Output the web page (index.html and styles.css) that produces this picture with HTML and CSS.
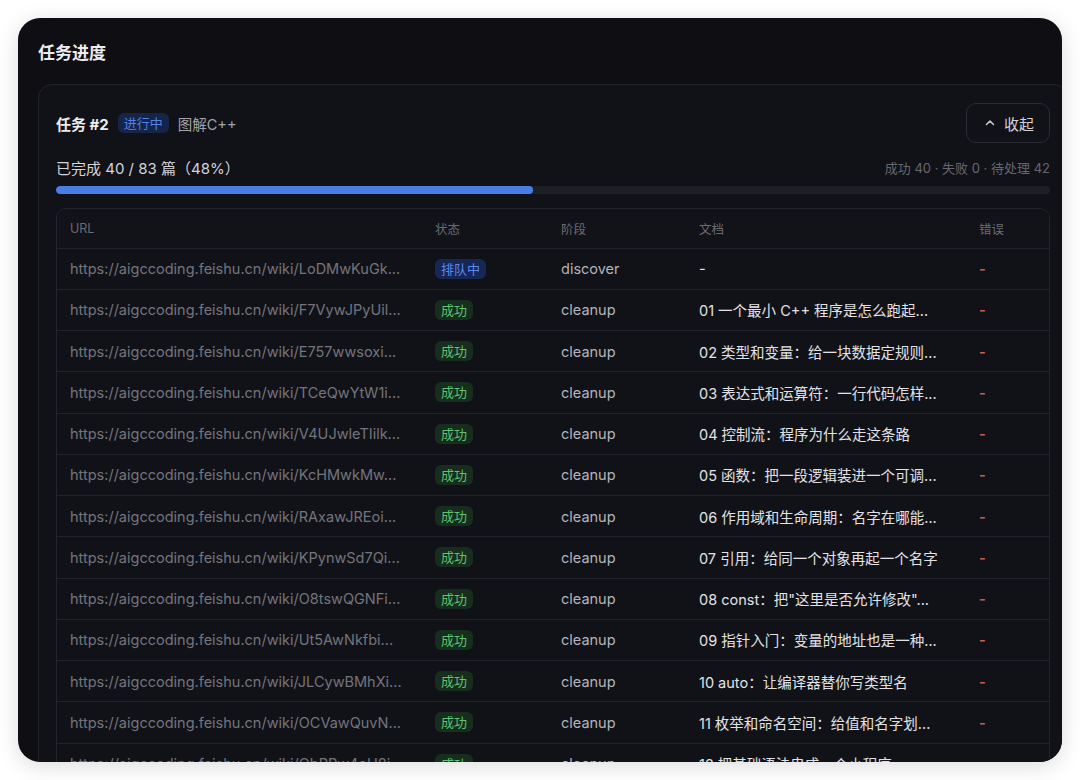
FILE: index.html
```html
<!DOCTYPE html>
<html lang="zh-CN">

<head>
    <meta charset="UTF-8">
    <meta name="viewport" content="width=device-width, initial-scale=1.0">
    <title>任务进度</title>
    <link rel="stylesheet" href="styles.css">
</head>

<body>
    <div class="panel">
        <h2 class="panel-title">任务进度</h2>

        <div class="task-card">
            <div class="task-head">
                <div class="task-info">
                    <span class="task-name">任务 #2</span>
                    <span class="badge badge-running">进行中</span>
                    <span class="task-book">图解C++</span>
                </div>
                <button class="collapse-btn">
                    <svg width="12" height="12" viewBox="0 0 12 12" fill="none">
                        <path d="M2.5 7.5 6 4l3.5 3.5" stroke="#c9c9cf" stroke-width="1.5" stroke-linecap="round" stroke-linejoin="round" />
                    </svg>
                    收起
                </button>
            </div>

            <div class="progress-line">
                <span class="progress-text">已完成 40 / 83 篇（48%）</span>
                <span class="progress-stats">成功 40 · 失败 0 · 待处理 42</span>
            </div>
            <div class="progress-bar">
                <div class="progress-fill" style="width: 48%"></div>
            </div>

            <div class="table-wrap">
                <table class="doc-table">
                    <colgroup>
                        <col style="width: 365px">
                        <col style="width: 126px">
                        <col style="width: 138px">
                        <col style="width: 280px">
                        <col>
                    </colgroup>
                    <thead>
                        <tr>
                            <th>URL</th>
                            <th>状态</th>
                            <th>阶段</th>
                            <th>文档</th>
                            <th>错误</th>
                        </tr>
                    </thead>
                    <tbody>
                        <tr>
                            <td class="url">https://aigccoding.feishu.cn/wiki/LoDMwKuGk...</td>
                            <td><span class="badge badge-queued">排队中</span></td>
                            <td class="stage">discover</td>
                            <td class="doc">-</td>
                            <td class="err">-</td>
                        </tr>
                        <tr>
                            <td class="url">https://aigccoding.feishu.cn/wiki/F7VywJPyUil...</td>
                            <td><span class="badge badge-ok">成功</span></td>
                            <td class="stage">cleanup</td>
                            <td class="doc">01 一个最小 C++ 程序是怎么跑起...</td>
                            <td class="err">-</td>
                        </tr>
                        <tr>
                            <td class="url">https://aigccoding.feishu.cn/wiki/E757wwsoxi...</td>
                            <td><span class="badge badge-ok">成功</span></td>
                            <td class="stage">cleanup</td>
                            <td class="doc">02 类型和变量：给一块数据定规则...</td>
                            <td class="err">-</td>
                        </tr>
                        <tr>
                            <td class="url">https://aigccoding.feishu.cn/wiki/TCeQwYtW1i...</td>
                            <td><span class="badge badge-ok">成功</span></td>
                            <td class="stage">cleanup</td>
                            <td class="doc">03 表达式和运算符：一行代码怎样...</td>
                            <td class="err">-</td>
                        </tr>
                        <tr>
                            <td class="url">https://aigccoding.feishu.cn/wiki/V4UJwleTIilk...</td>
                            <td><span class="badge badge-ok">成功</span></td>
                            <td class="stage">cleanup</td>
                            <td class="doc">04 控制流：程序为什么走这条路</td>
                            <td class="err">-</td>
                        </tr>
                        <tr>
                            <td class="url">https://aigccoding.feishu.cn/wiki/KcHMwkMw...</td>
                            <td><span class="badge badge-ok">成功</span></td>
                            <td class="stage">cleanup</td>
                            <td class="doc">05 函数：把一段逻辑装进一个可调...</td>
                            <td class="err">-</td>
                        </tr>
                        <tr>
                            <td class="url">https://aigccoding.feishu.cn/wiki/RAxawJREoi...</td>
                            <td><span class="badge badge-ok">成功</span></td>
                            <td class="stage">cleanup</td>
                            <td class="doc">06 作用域和生命周期：名字在哪能...</td>
                            <td class="err">-</td>
                        </tr>
                        <tr>
                            <td class="url">https://aigccoding.feishu.cn/wiki/KPynwSd7Qi...</td>
                            <td><span class="badge badge-ok">成功</span></td>
                            <td class="stage">cleanup</td>
                            <td class="doc">07 引用：给同一个对象再起一个名字</td>
                            <td class="err">-</td>
                        </tr>
                        <tr>
                            <td class="url">https://aigccoding.feishu.cn/wiki/O8tswQGNFi...</td>
                            <td><span class="badge badge-ok">成功</span></td>
                            <td class="stage">cleanup</td>
                            <td class="doc">08 const：把"这里是否允许修改"...</td>
                            <td class="err">-</td>
                        </tr>
                        <tr>
                            <td class="url">https://aigccoding.feishu.cn/wiki/Ut5AwNkfbi...</td>
                            <td><span class="badge badge-ok">成功</span></td>
                            <td class="stage">cleanup</td>
                            <td class="doc">09 指针入门：变量的地址也是一种...</td>
                            <td class="err">-</td>
                        </tr>
                        <tr>
                            <td class="url">https://aigccoding.feishu.cn/wiki/JLCywBMhXi...</td>
                            <td><span class="badge badge-ok">成功</span></td>
                            <td class="stage">cleanup</td>
                            <td class="doc">10 auto：让编译器替你写类型名</td>
                            <td class="err">-</td>
                        </tr>
                        <tr>
                            <td class="url">https://aigccoding.feishu.cn/wiki/OCVawQuvN...</td>
                            <td><span class="badge badge-ok">成功</span></td>
                            <td class="stage">cleanup</td>
                            <td class="doc">11 枚举和命名空间：给值和名字划...</td>
                            <td class="err">-</td>
                        </tr>
                        <tr>
                            <td class="url">https://aigccoding.feishu.cn/wiki/ObPPw4eU8i...</td>
                            <td><span class="badge badge-ok">成功</span></td>
                            <td class="stage">cleanup</td>
                            <td class="doc">12 把基础语法串成一个小程序</td>
                            <td class="err">-</td>
                        </tr>
                    </tbody>
                </table>
            </div>
        </div>
    </div>
</body>

</html>
```

FILE: styles.css
```css
* {
    box-sizing: border-box;
}

body {
    margin: 0;
    padding: 18px;
    background: #ffffff;
    font-family: "Inter", "Noto Sans CJK SC", sans-serif;
}

.panel {
    width: 1044px;
    height: 744px;
    padding: 22px 0 0 20px;
    background: #0e0e13;
    border-radius: 22px;
    overflow: hidden;
    box-shadow: 0 4px 22px rgba(0, 0, 0, 0.14);
}

.panel-title {
    margin: 0;
    font-size: 17px;
    line-height: 26px;
    font-weight: 700;
    color: #ececf0;
}

.task-card {
    width: 1030px;
    margin-top: 18px;
    padding: 18px 17px 0 17px;
    background: #111218;
    border: 1px solid #23242b;
    border-radius: 14px;
}

.task-head {
    display: flex;
    align-items: center;
    justify-content: space-between;
    height: 40px;
}

.task-info {
    display: flex;
    align-items: center;
}

.task-name {
    font-size: 15px;
    font-weight: 700;
    color: #ededf0;
    margin-right: 9px;
}

.task-book {
    font-size: 14.5px;
    color: #a2a2aa;
    margin-left: 9px;
}

.badge {
    display: inline-block;
    font-size: 13px;
    line-height: 20px;
    padding: 0 6px;
    border-radius: 6px;
}

.badge-running {
    background: #16244a;
    color: #4f82e6;
}

.badge-queued {
    background: #162655;
    color: #5a8af0;
}

.badge-ok {
    background: #172d1e;
    color: #5ec46d;
}

.collapse-btn {
    display: flex;
    align-items: center;
    gap: 8px;
    height: 40px;
    padding: 0 15px 0 17px;
    background: transparent;
    border: 1px solid #2a2b33;
    border-radius: 10px;
    font-family: inherit;
    font-size: 15px;
    color: #d2d2d8;
}

.progress-line {
    display: flex;
    align-items: center;
    justify-content: space-between;
    margin-top: 14px;
    height: 20px;
}

.progress-text {
    font-size: 15px;
    color: #d4d4da;
}

.progress-stats {
    font-size: 13px;
    color: #66666e;
}

.progress-bar {
    height: 8px;
    margin-top: 9px;
    background: #1e1f26;
    border-radius: 4px;
    overflow: hidden;
}

.progress-fill {
    height: 100%;
    background: #4a7ee6;
    border-radius: 4px;
}

.table-wrap {
    margin-top: 14px;
    border: 1px solid #24252c;
    border-radius: 10px;
    overflow: hidden;
}

.doc-table {
    width: 100%;
    border-collapse: collapse;
    table-layout: fixed;
}

.doc-table th {
    height: 39px;
    padding: 0 0 0 13px;
    text-align: left;
    font-size: 12.5px;
    font-weight: 400;
    color: #6b6b73;
    background: #121219;
}

.doc-table td {
    height: 41.25px;
    padding: 0 0 0 13px;
    font-size: 14.5px;
    white-space: nowrap;
    overflow: hidden;
    border-top: 1px solid #22232a;
}

.doc-table td.url {
    color: #74747c;
}

.doc-table td.stage {
    color: #b4b4bb;
}

.doc-table td.doc {
    color: #e2e2e6;
}

.doc-table td.err {
    color: #c85c57;
    font-weight: 600;
}
```
